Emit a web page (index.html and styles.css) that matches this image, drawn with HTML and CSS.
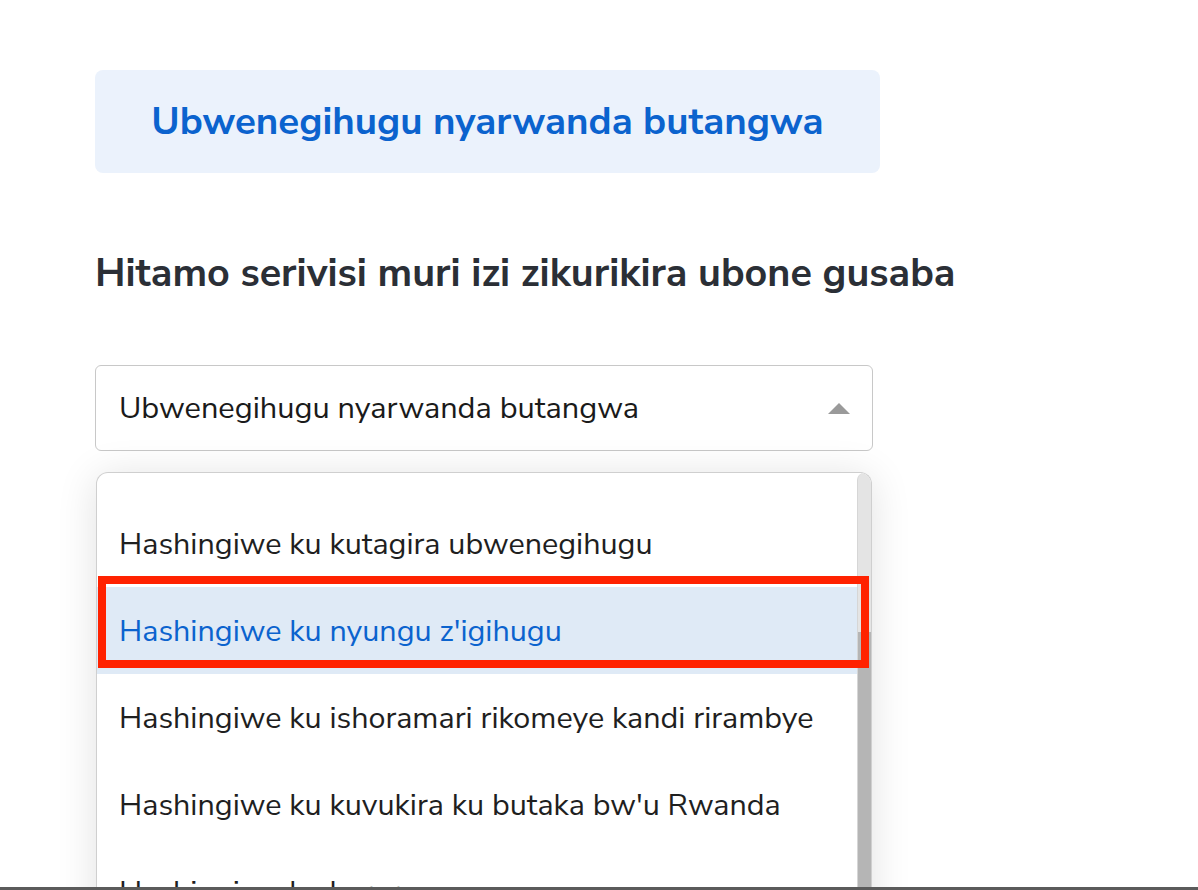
FILE: index.html
```html
<!DOCTYPE html>
<html lang="rw">
<head>
    <meta charset="UTF-8">
    <meta name="viewport" content="width=device-width, initial-scale=1.0">
    <title>Ubwenegihugu nyarwanda butangwa</title>
    <link rel="stylesheet" href="styles.css">
</head>
<body>
    <div class="page">
        <div class="banner">
            <h2>Ubwenegihugu nyarwanda butangwa</h2>
        </div>

        <h1 class="question">Hitamo serivisi muri izi zikurikira ubone gusaba</h1>

        <div class="select">
            <span>Ubwenegihugu nyarwanda butangwa</span>
            <span class="caret"></span>
        </div>

        <div class="options">
            <ul class="option-list">
                <li class="option">Hashingiwe ku kutagira ubwenegihugu</li>
                <li class="option active">
                    Hashingiwe ku nyungu z'igihugu
                    <span class="marker"></span>
                </li>
                <li class="option">Hashingiwe ku ishoramari rikomeye kandi rirambye</li>
                <li class="option">Hashingiwe ku kuvukira ku butaka bw'u Rwanda</li>
                <li class="option">Hashingiwe ku kurera</li>
            </ul>
            <div class="scrollbar"><div class="thumb"></div></div>
        </div>
    </div>
    <div class="window-edge"></div>
</body>
</html>
```

FILE: styles.css
```css
body {
    margin: 0;
    background-color: #fff;
    font-family: 'Nunito Sans', Lato, 'Open Sans', sans-serif;
    color: #1f1f1f;
    overflow: hidden;
    height: 890px;
}
.page {
    padding: 70px 0 0 95px;
    width: 785px;
}
.banner {
    background-color: #ebf2fc;
    border-radius: 8px;
    height: 103px;
    display: flex;
    align-items: center;
    justify-content: center;
}
.banner h2 {
    margin: 0;
    font-size: 38.5px;
    font-weight: 700;
    color: #0b63ce;
}
.question {
    margin: 70px 0 0;
    font-size: 39.5px;
    font-weight: 700;
    color: #2b2f36;
    line-height: 60px;
    white-space: nowrap;
}
.select {
    margin-top: 62px;
    width: 778px;
    height: 86px;
    box-sizing: border-box;
    border: 1px solid #c8c8c8;
    border-radius: 6px;
    display: flex;
    align-items: center;
    justify-content: space-between;
    padding: 0 22px 0 23px;
    font-size: 30.7px;
    color: #1a1a1a;
}
.caret {
    width: 0;
    height: 0;
    border-left: 11px solid transparent;
    border-right: 11px solid transparent;
    border-bottom: 11px solid #9a9a9a;
}
.options {
    margin-top: 21px;
    margin-left: 1px;
    width: 776px;
    height: 500px;
    box-sizing: border-box;
    border: 1px solid #cfcfcf;
    border-bottom: none;
    border-radius: 12px 12px 0 0;
    box-shadow: 0 4px 40px rgba(0, 0, 0, 0.12);
    background-color: #fff;
    display: flex;
    overflow: hidden;
}
.option-list {
    list-style: none;
    margin: 0;
    padding: 27px 0 0;
    flex: 1;
}
.option {
    position: relative;
    height: 87px;
    display: flex;
    align-items: center;
    padding-left: 22px;
    font-size: 30.5px;
    color: #1f1f1f;
}
.option.active {
    background-color: #dfeaf6;
    color: #0b63ce;
}
.marker {
    position: absolute;
    left: 1px;
    right: -12px;
    top: -11px;
    bottom: 6px;
    border: 8px solid #ff2200;
}
.scrollbar {
    width: 13px;
    background-color: #e4e4e4;
    border-radius: 8px 8px 0 0;
    border-left: 1px solid #d6d6d6;
    display: flex;
    flex-direction: column;
}
.thumb {
    margin-top: 159px;
    flex: 1;
    background-color: #b5b5b5;
}
.window-edge {
    position: fixed;
    left: 0;
    right: 0;
    bottom: 0;
    height: 3px;
    background-color: #5b5b5b;
}
```
